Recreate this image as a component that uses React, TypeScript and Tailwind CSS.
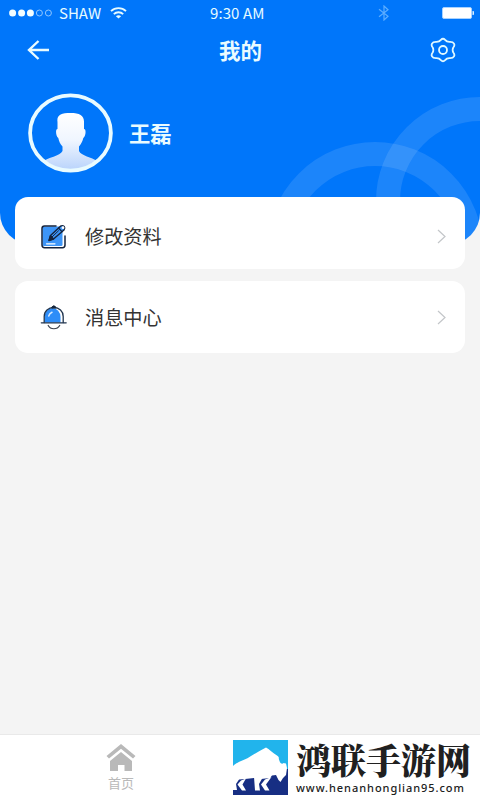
import type { ReactNode } from "react";
import clsx from "clsx";

const cards = [
  { label: "修改资料", icon: <EditIcon />, className: "pt-[7px]" },
  { label: "消息中心", icon: <BellIcon />, className: "pt-px" },
];

function StatusBar() {
  return (
    <div className="relative flex items-center h-[26px] px-[9px] text-[15px] text-[#e6fbff]">
      <svg width="44" height="10" viewBox="0 0 44 10" fill="none">
        <circle cx="3.6" cy="5" r="3.5" fill="#f2fdff" />
        <circle cx="12.6" cy="5" r="3.5" fill="#f2fdff" />
        <circle cx="21.4" cy="5" r="3.5" fill="#f2fdff" />
        <circle cx="30.4" cy="5" r="3" stroke="#8fc6ff" />
        <circle cx="39.4" cy="5" r="3" stroke="#8fc6ff" />
      </svg>
      <span className="ml-[6px] w-[43px]">SHAW</span>
      <svg className="ml-[8px]" width="17" height="12" viewBox="0 0 17 12" fill="none" stroke="#e6fbff" strokeWidth="1.8">
        <path d="M1 4.2C5.2 .2 11.8 .2 16 4.2" />
        <path d="M3.8 7.1C6.4 4.6 10.6 4.6 13.2 7.1" />
        <path d="M5.9 9.2C7.3 7.8 9.7 7.8 11.1 9.2L8.5 11.6Z" fill="#e6fbff" stroke="none" />
      </svg>
      <span className="ml-[83px] w-[56px] whitespace-nowrap tracking-[0.1px]">9:30 AM</span>
      <svg className="ml-[112px]" width="12" height="16" viewBox="0 0 12 16" fill="none" stroke="#5cadff" strokeWidth="1.2">
        <path d="M1 4.3L10 11.3L6 15V1L10 4.7L1 11.7" />
      </svg>
      <svg className="ml-auto -mr-[3px]" width="32" height="12" viewBox="0 0 32 12">
        <rect x=".5" y=".5" width="29" height="11" rx="1.5" fill="#fff" stroke="#a8d2ff" />
        <path d="M30.5 4H31.2Q32 4 32 5V7Q32 8 31.2 8H30.5Z" fill="#d8efff" />
      </svg>
    </div>
  );
}

function Avatar() {
  return (
    <svg width="86" height="80" viewBox="0 0 86 80">
      <defs>
        <linearGradient id="person" x1="0" y1="0" x2="0" y2="1">
          <stop offset="0" stopColor="#ffffff" />
          <stop offset=".45" stopColor="#f0f6ff" />
          <stop offset="1" stopColor="#b4d0fb" />
        </linearGradient>
        <clipPath id="face">
          <ellipse cx="42.5" cy="40" rx="39.5" ry="36.5" />
        </clipPath>
      </defs>
      <path
        clipPath="url(#face)"
        fill="url(#person)"
        d="M29.5 29C28.5 22 33 20 42.5 20C52 20 56.5 22.5 56 30V36C58.5 36 57.8 43 55.3 45C54.3 49 53 51 51 53.5V58C53 63 64 64 69 68V80H14V69C20 64.5 32 63 34.5 58V53.5C32 51 31 48 30.3 45C27.8 43 27.2 36 29.5 36Z"
      />
      <ellipse cx="42.5" cy="40" rx="40.4" ry="37.6" fill="none" stroke="#e9fbff" strokeWidth="3.8" />
    </svg>
  );
}

function EditIcon() {
  return (
    <svg width="28" height="26" viewBox="0 0 28 26" fill="none" strokeLinecap="round" strokeLinejoin="round">
      <rect x="2.5" y="2.5" width="20" height="19.5" rx="1.5" fill="#3d95f7" />
      <path d="M16 2H4.5Q2 2 2 4.5V21Q2 23.7 4.7 23.7H22.5Q25 23.7 25 21V12" stroke="#15233c" strokeWidth="1.5" />
      <path d="M9 16.5L10.5 11.5L20.5 2.2Q22.5 .9 24.2 2.5Q25.5 4.3 24 6L13.5 15Z" fill="#3d95f7" stroke="#15233c" strokeWidth="1.4" />
      <path d="M9 16.5L10.5 11.5L13.5 15ZM18.5 4L22 7.7" fill="#15233c" stroke="#15233c" strokeWidth="1.2" />
      <circle cx="23" cy="3.7" r="1.4" fill="#fff" />
      <path d="M12 13L18.5 6.8" stroke="#15233c" />
      <path d="M6.5 19.8H15" stroke="#fff" strokeWidth="1.2" />
    </svg>
  );
}

function BellIcon() {
  return (
    <svg width="28" height="26" viewBox="0 0 28 26" fill="none" strokeLinecap="round">
      <path d="M4.5 17.5V12A8 9 0 0 1 20.5 12V17.5Z" fill="#2e8df8" />
      <path d="M4.2 17.5V11.5C4.2 5.9 8.4 2.5 13.8 2.5C19.2 2.5 23.2 6.2 23.2 11.5V17.5" stroke="#20354f" strokeWidth="1.3" />
      <path d="M1.3 17.8H26.2" stroke="#20354f" strokeWidth="1.3" />
      <path d="M11.8 2.6V2Q13.8 -.4 15.8 2V2.6Z" fill="#17263c" stroke="#17263c" />
      <path d="M8.7 11Q9.5 8.3 12 7.2" stroke="#d9ebff" strokeWidth="1.5" />
      <path d="M8.2 20.5C10.5 24.8 17.2 24.8 19.7 20.5" stroke="#3a3f4a" strokeWidth="1.2" />
    </svg>
  );
}

function MenuCard({ label, icon, className }: { label: string; icon: ReactNode; className: string }) {
  return (
    <div className={clsx("flex items-center h-[72px] pl-[25px] pr-[18px] bg-white rounded-[13px]", className)}>
      {icon}
      <span className="ml-[17px] text-[19.2px] text-[#333333]">{label}</span>
      <svg className="ml-auto" width="11" height="15" viewBox="0 0 11 15" fill="none" stroke="#c3c6c9" strokeWidth="1.2">
        <path d="M2 1L9 7.5L2 14" />
      </svg>
    </div>
  );
}

function BisonLogo() {
  return (
    <svg width="55" height="55" viewBox="0 0 55 55">
      <path d="M0 0H55V55H0Z" fill="#21b4ec" />
      <path d="M0 29H55V55H0Z" fill="#172e83" />
      <g fill="#fff">
        <path d="M0 26C5 21 13 20 18 16C23 13 28 10 33 7.5C36 9 40 13 44 15.5L47 18L50 23L53 23.5L54 28L53 35L50 38L47.5 42L45.5 40L43 35L39 35.5L37 38L28 39L21 38L12 39L0 40Z" />
        <path d="M0 38H7L3 44L4 50H0Z" />
        <path d="M13 38.5L8 40.5L4.5 44.5L9 50.5H13L9.5 44.5Z" />
        <path d="M21 37H30L26 44L27 50.5H22Z" />
        <path d="M38.5 37L32 39.5L28 44.5L32 50.5H36.5L33 44.5Z" />
      </g>
      <path d="M49 11C45.5 14 45 18 46.5 21C47.5 24 49.5 24.5 50.8 22.5C51.5 20.5 50.5 18 49 16.5C48 15 48.2 13 49 11Z" fill="#21b4ec" />
    </svg>
  );
}

export default function App() {
  return (
    <div className="flex flex-col w-[480px] h-[800px] overflow-hidden bg-[#f4f4f4] font-['Noto_Sans_CJK_SC',sans-serif]">
      <header className="relative h-[244px] shrink-0 overflow-hidden rounded-b-[31px] bg-[#0076fa]">
        <svg className="absolute inset-0" width="480" height="244" fill="none" stroke="#fff" strokeOpacity=".11" strokeWidth="24">
          <circle cx="375" cy="250" r="96" />
          <circle cx="480" cy="201" r="92" />
        </svg>
        <StatusBar />
        <div className="relative flex items-center justify-between h-[48px] pl-[27px] pr-[24px]">
          <svg width="23" height="22" viewBox="0 0 23 22" fill="none" stroke="#e9fbff" strokeWidth="2.4">
            <path d="M11.5 2L2 11L11.5 20M2 11H22" />
          </svg>
          <h1 className="ml-px text-[21.5px] font-bold text-[#e9fbff]">我的</h1>
          <svg width="26" height="26" viewBox="0 0 26 26" fill="none" stroke="#dff8ff" strokeWidth="1.8" strokeLinejoin="round">
            <path d="M10.9 2.9Q13 .6 15.1 2.9Q16.9 5 19.8 4.8Q23 4.7 24 6.6Q25 8.6 23.3 10.5Q22 13 23.3 15.5Q25 17.4 24 19.4Q23 21.3 19.8 21.2Q16.9 21 15.1 23.1Q13 25.4 10.9 23.1Q9.1 21 6.2 21.2Q3 21.3 2 19.4Q1 17.4 2.7 15.5Q4 13 2.7 10.5Q1 8.6 2 6.6Q3 4.7 6.2 4.8Q9.1 5 10.9 2.9Z" />
            <circle cx="13" cy="13" r="4" />
          </svg>
        </div>
        <div className="relative flex items-center mt-[19px] pl-[28px]">
          <Avatar />
          <span className="ml-[15px] text-[21.3px] font-bold text-[#e9fbff]">王磊</span>
        </div>
      </header>
      <main className="relative flex flex-col flex-1 gap-3 -mt-[47px] pl-[15px] pr-[15px]">
        {cards.map((card) => (
          <MenuCard key={card.label} {...card} />
        ))}
      </main>
      <footer className="flex h-[66px] shrink-0 border-t border-[#e9e9e9] bg-white">
        <div className="flex flex-col items-center w-[233px] pl-[9px] pt-[9px]">
          <svg width="30" height="28" viewBox="0 0 30 28" fill="#b9b9b9">
            <path d="M15 0L29.5 12L27 14.5L15 4.7L3 14.5L.5 12Z" />
            <path d="M15 8L26 17V27H18.5V21H12V27H4V17Z" />
          </svg>
          <span className="mt-px text-[13px] leading-[20px] text-[#b9b9b9]">首页</span>
        </div>
        <div className="flex pt-[5px]">
          <BisonLogo />
          <div className="flex flex-col ml-[8px]">
            <span className="h-[38px] text-[35px] leading-[38px] font-black whitespace-nowrap text-[#202020] font-['Noto_Serif_CJK_SC','Noto_Sans_CJK_SC',serif]">
              鸿联手游网
            </span>
            <span className="mt-[3px] text-[11px] leading-[14px] tracking-[0.95px] font-medium whitespace-nowrap text-[#202020] font-['Noto_Sans',sans-serif]">
              www.henanhonglian95.com
            </span>
          </div>
        </div>
      </footer>
    </div>
  );
}
